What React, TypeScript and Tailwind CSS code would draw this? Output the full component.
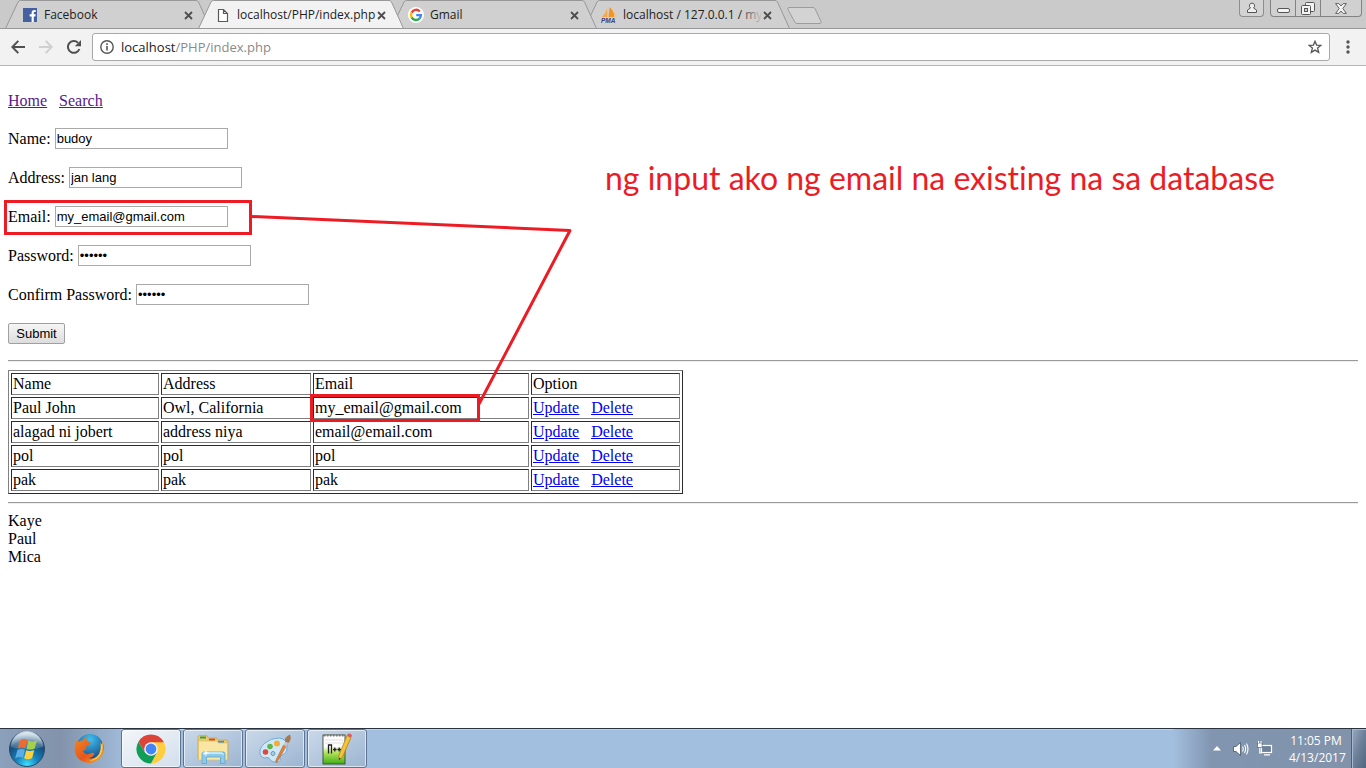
import type { ReactNode } from "react";

function CloseIcon() {
  return (
    <svg viewBox="0 0 9 9" className="h-[9px] w-[9px]" aria-hidden="true">
      <path d="M1 1 L8 8 M8 1 L1 8" stroke="#4d4d4d" strokeWidth="1.8" fill="none" />
    </svg>
  );
}

function FacebookIcon() {
  return (
    <svg viewBox="0 0 14 14" className="h-[14px] w-[14px]" aria-hidden="true">
      <rect width="14" height="14" fill="#4460a0" />
      <path d="M9.2 14 V8.4 H7.2 V6.2 H9.2 V4.7 C9.2 2.9 10.2 1.9 12 1.9 H13.3 V4 H12.3 C11.6 4 11.4 4.4 11.4 5 V6.2 H13.3 L13 8.4 H11.4 V14 Z" transform="translate(-0.6 0)" fill="#fff" />
    </svg>
  );
}

function PageIcon() {
  return (
    <svg viewBox="0 0 12 15" className="h-[15px] w-3" aria-hidden="true">
      <path d="M1.5 1.5 H6.5 L10.5 5.5 V13.5 H1.5 Z M6.5 1.5 V5.5 H10.5" fill="#fff" stroke="#5a5a5a" strokeWidth="1.2" />
    </svg>
  );
}

function GoogleIcon() {
  return (
    <svg viewBox="0 0 16 16" className="h-4 w-4" aria-hidden="true">
      <circle cx="8" cy="8" r="8" fill="#fff" />
      <g fill="none" strokeWidth="2.4">
        <path d="M11.8 4.5 A5 5 0 0 0 3.6 5.6" stroke="#ea4335" />
        <path d="M3.6 5.6 A5 5 0 0 0 3.6 10.4" stroke="#fbbc05" />
        <path d="M3.6 10.4 A5 5 0 0 0 11.4 11.7" stroke="#34a853" />
        <path d="M11.4 11.7 A5 5 0 0 0 12.9 8.1 H8.2" stroke="#4285f4" />
      </g>
    </svg>
  );
}

function PmaIcon() {
  return (
    <svg viewBox="0 0 16 16" className="h-4 w-4" aria-hidden="true">
      <path d="M6 1 L6.5 10 L1 10 Q5 6 6 1 Z" fill="#f4a84a" />
      <path d="M8.5 0 Q14 5 13 10 L7.5 10 Z" fill="#f7941d" />
      <path d="M13 4 Q15.5 7 15.5 10 L13.6 10 Z" fill="#f9c27c" />
      <text x="0" y="15.6" fontFamily="Liberation Sans, sans-serif" fontSize="6.500" fontWeight="bold" fontStyle="italic" fill="#3f3f7c">
        PMA
      </text>
    </svg>
  );
}

type TabProps = { title: string; icon: ReactNode; active?: boolean; faded?: boolean; layer: string };

function Tab({ title, icon, active, faded, layer }: TabProps) {
  return (
    <li className={`relative -mr-[13px] flex h-[29px] w-[206px] shrink-0 items-center pt-px pr-[18px] pl-4 ${layer}`}>
      <svg viewBox="0 0 206 29" preserveAspectRatio="none" className="absolute inset-0 h-full w-full" aria-hidden="true">
        <path d="M0.5 29 L13 2 Q14 0.5 15.500 0.5 H191 Q192.500 0.5 193.500 2 L205.500 29 Z" fill={active ? "#f2f2f2" : "#d0d0d0"} />
        <path
          d={
            active
              ? "M0.5 28.500 L13 2 Q14 0.5 15.500 0.5 H191 Q192.500 0.5 193.500 2 L205.500 28.500"
              : "M0.5 28.500 L13 2 Q14 0.5 15.500 0.5 H191 Q192.500 0.5 193.500 2 L205.500 28.500 Z"
          }
          fill="none"
          stroke="#989898"
        />
      </svg>
      <span className="relative mr-[5px] flex w-[18px] shrink-0 items-center justify-center">{icon}</span>
      <span className="relative min-w-0 flex-1 text-xs whitespace-nowrap text-[#222]">
        {title}
        {faded && <span className="absolute inset-y-0 right-0 w-6 bg-gradient-to-r from-transparent to-[#d0d0d0]" />}
      </span>
      <button type="button" aria-label={`Close ${title}`} className="relative">
        <CloseIcon />
      </button>
    </li>
  );
}

function WindowControls() {
  return (
    <div className="ml-auto flex h-[17px] shrink-0 items-stretch pr-1">
      <button type="button" aria-label="Profile" className="mr-1.5 flex w-[25px] items-center justify-center rounded-b border border-t-0 border-[#8e8e8e] bg-[#d3d3d3]">
        <svg viewBox="0 0 12 12" className="h-3 w-3" aria-hidden="true">
          <path d="M6 1.200 A2.300 2.600 0 0 1 7.500 6 L10.500 8 V10.500 H1.500 V8 L4.500 6 A2.300 2.600 0 0 1 6 1.200 Z" fill="#f0f0f0" stroke="#555" />
        </svg>
      </button>
      <div className="flex overflow-hidden rounded-b border border-t-0 border-[#828282] bg-[#d0d0d0]">
        <button type="button" aria-label="Minimize" className="flex w-[25px] items-center justify-center border-r border-[#828282]">
          <svg viewBox="0 0 13 5" className="mt-1 h-[5px] w-[13px]" aria-hidden="true">
            <rect x="0.500" y="0.500" width="12" height="4" rx="1.500" fill="#f4f4f4" stroke="#555" />
          </svg>
        </button>
        <button type="button" aria-label="Restore" className="flex w-[25px] items-center justify-center border-r border-[#828282]">
          <svg viewBox="0 0 14 13" className="h-[13px] w-3.5" aria-hidden="true">
            <rect x="4.500" y="0.500" width="9" height="9" rx="1" fill="#f4f4f4" stroke="#555" />
            <rect x="0.500" y="3.500" width="9" height="9" rx="1" fill="#f4f4f4" stroke="#555" />
            <rect x="3.500" y="6.500" width="3" height="3" fill="#d0d0d0" stroke="#555" />
          </svg>
        </button>
        <button type="button" aria-label="Close window" className="flex w-10 items-center justify-center">
          <svg viewBox="0 0 12 11" className="h-[11px] w-3" aria-hidden="true">
            <path d="M0.600 0.600 H3.800 L6 3 L8.200 0.600 H11.400 L7.800 5.500 L11.400 10.400 H8.200 L6 8 L3.800 10.400 H0.600 L4.200 5.500 Z" fill="#f4f4f4" stroke="#555" strokeWidth="0.900" />
          </svg>
        </button>
      </div>
    </div>
  );
}

function TabStrip() {
  return (
    <div className="flex h-[29px] items-start overflow-hidden border-b border-[#989898] bg-[#cacaca]">
      <ul className="-mb-px flex pl-[5px]">
        <Tab title="Facebook" icon={<FacebookIcon />} layer="z-[3]" />
        <Tab title="localhost/PHP/index.php" icon={<PageIcon />} active layer="z-[4]" />
        <Tab title="Gmail" icon={<GoogleIcon />} layer="z-[2]" />
        <Tab title="localhost / 127.0.0.1 / my" icon={<PmaIcon />} faded layer="z-[1]" />
      </ul>
      <button type="button" aria-label="New tab" className="mt-[7px] ml-2.5">
        <svg viewBox="0 0 35 17" className="h-[17px] w-[35px]" aria-hidden="true">
          <path d="M2 0.500 H26 Q27.500 0.500 28.200 2 L34 14.500 Q34.500 16.500 33 16.500 H10 Q8.500 16.500 7.700 15 L1 2.500 Q0.400 0.500 2 0.500 Z" fill="#d3d3d3" stroke="#9c9c9c" />
        </svg>
      </button>
      <WindowControls />
    </div>
  );
}

function Toolbar() {
  return (
    <div className="flex h-[37px] items-center border-b border-[#b6b6b6] bg-[#f2f2f2] pl-[11px]">
      <button type="button" aria-label="Back">
        <svg viewBox="0 0 14 14" className="h-3.5 w-3.5" aria-hidden="true">
          <path d="M14 7 H1.500 M7.300 0.900 L1.300 7 L7.300 13.100" fill="none" stroke="#505050" strokeWidth="2" />
        </svg>
      </button>
      <button type="button" aria-label="Forward" className="ml-3.5">
        <svg viewBox="0 0 14 14" className="h-3.5 w-3.5" aria-hidden="true">
          <path d="M0 7 H12.500 M6.700 0.900 L12.700 7 L6.700 13.100" fill="none" stroke="#cfcfcf" strokeWidth="2" />
        </svg>
      </button>
      <button type="button" aria-label="Reload" className="ml-3.5">
        <svg viewBox="0 0 14 14" className="h-3.5 w-3.5" aria-hidden="true">
          <path d="M12.400 9 A5.900 5.900 0 1 1 11 2.700" fill="none" stroke="#505050" strokeWidth="2" />
          <path d="M14 0 V6.200 H7.800 Z" fill="#505050" />
        </svg>
      </button>
      <div className="ml-[11px] flex h-7 min-w-0 flex-1 items-center rounded-[3px] border border-[#a9a9a9] bg-white pr-[7px] pl-[7px]">
        <svg viewBox="0 0 14 14" className="h-3.5 w-3.5 shrink-0" aria-hidden="true">
          <circle cx="7" cy="7" r="6.200" fill="none" stroke="#555" strokeWidth="1.400" />
          <path d="M7 6 V10.500 M7 3.300 V5" stroke="#555" strokeWidth="1.600" />
        </svg>
        <p className="ml-[7px] min-w-0 flex-1 text-[13px] leading-5 text-[#8a8a8a]">
          <span className="text-[#222]">localhost</span>/PHP/index.php
        </p>
        <button type="button" aria-label="Bookmark this page">
          <svg viewBox="0 0 14 14" className="h-3.5 w-3.5" aria-hidden="true">
            <path d="M7 1.300 L8.600 5.100 L12.900 5.400 L9.600 8.100 L10.700 12.400 L7 10.100 L3.300 12.400 L4.400 8.100 L1.100 5.400 L5.400 5.100 Z" fill="none" stroke="#555" strokeWidth="1.300" />
          </svg>
        </button>
      </div>
      <button type="button" aria-label="Menu" className="mr-4 ml-4">
        <svg viewBox="0 0 4 14" className="h-3.5 w-1" aria-hidden="true">
          <g fill="#555">
            <circle cx="2" cy="2" r="1.700" />
            <circle cx="2" cy="7" r="1.700" />
            <circle cx="2" cy="12" r="1.700" />
          </g>
        </svg>
      </button>
    </div>
  );
}

const fields = [
  { id: "name", label: "Name:", type: "text", value: "budoy" },
  { id: "address", label: "Address:", type: "text", value: "jan lang" },
  { id: "email", label: "Email:", type: "text", value: "my_email@gmail.com" },
  { id: "password", label: "Password:", type: "password", value: "123456" },
  { id: "confirm", label: "Confirm Password:", type: "password", value: "123456" },
];

const people = [
  ["Paul John", "Owl, California", "my_email@gmail.com"],
  ["alagad ni jobert", "address niya", "email@email.com"],
  ["pol", "pol", "pol"],
  ["pak", "pak", "pak"],
];

const cell = "border border-t-[#2c2c2c] border-r-[#808080] border-b-[#808080] border-l-[#2c2c2c] p-px text-left font-normal";

function Rule() {
  return <hr className="h-0.5 border-t border-b border-t-[#9a9a9a] border-b-[#eeeeee]" />;
}

function Page() {
  return (
    <main className="relative flex-1 bg-white px-2 pt-[26px] pb-2 font-['Liberation_Serif',serif] text-base leading-[18px] text-black">
      <nav className="flex gap-3 text-[#551a8b] underline">
        <a href="#home">Home</a>
        <a href="#search">Search</a>
      </nav>

      <form className="mt-[18px] flex flex-col items-start gap-[18px]" onSubmit={(e) => e.preventDefault()}>
        {fields.map((f) => (
          <div key={f.id} className="flex h-[21px] items-center gap-1">
            <label htmlFor={f.id}>{f.label}</label>
            <input
              id={f.id}
              type={f.type}
              defaultValue={f.value}
              className="h-[21px] w-[173px] border border-[#a9a9a9] bg-white px-px font-['Liberation_Sans',sans-serif] text-[13px]"
            />
          </div>
        ))}
        <button
          type="submit"
          className="h-[21px] w-[57px] rounded-[2px] border border-[#a0a0a0] bg-gradient-to-b from-[#f6f6f6] to-[#dddddd] font-['Liberation_Sans',sans-serif] text-[13px] leading-4"
        >
          Submit
        </button>
      </form>

      <div className="mt-4 flex flex-col gap-2">
        <Rule />
        <table className="w-[675px] table-fixed border-separate border-spacing-0.5 border border-t-[#808080] border-r-[#2c2c2c] border-b-[#2c2c2c] border-l-[#808080]">
          <colgroup>
            <col className="w-[148px]" />
            <col className="w-[150px]" />
            <col className="w-[216px]" />
            <col />
          </colgroup>
          <thead>
            <tr>
              {["Name", "Address", "Email", "Option"].map((h) => (
                <th key={h} scope="col" className={cell}>
                  {h}
                </th>
              ))}
            </tr>
          </thead>
          <tbody>
            {people.map((row) => (
              <tr key={row[0]}>
                {row.map((value, i) => (
                  <td key={i} className={cell}>
                    {value}
                  </td>
                ))}
                <td className={cell}>
                  <span className="flex gap-3 text-[#0000ee] underline">
                    <a href="#update">Update</a>
                    <a href="#delete">Delete</a>
                  </span>
                </td>
              </tr>
            ))}
          </tbody>
        </table>
        <Rule />
        <div>
          <p>Kaye</p>
          <p>Paul</p>
          <p>Mica</p>
        </div>
      </div>

      <svg viewBox="0 0 600 400" className="pointer-events-none absolute top-0 left-0 h-[400px] w-[600px]" aria-hidden="true">
        <g fill="none" stroke="#ed1c24" strokeWidth="3">
          <rect x="5.500" y="135.500" width="245" height="32" />
          <rect x="311.500" y="329.500" width="167" height="25" />
          <path d="M252 150.500 L570 164.500 L479 338" strokeLinejoin="round" />
        </g>
      </svg>
      <p className="absolute top-[92px] left-[605px] font-['Lato',sans-serif] text-[32px] leading-10 whitespace-nowrap text-[#ed1c24] [font-variant-ligatures:none]">
        ng input ako ng email na existing na sa database
      </p>
    </main>
  );
}

function StartOrb() {
  return (
    <svg viewBox="0 0 38 38" className="h-[38px] w-[38px]" aria-hidden="true">
      <defs>
        <radialGradient id="orb" cx="0.5" cy="0.950" r="0.900">
          <stop offset="0" stopColor="#3fe0ff" />
          <stop offset="0.350" stopColor="#1583bd" />
          <stop offset="0.750" stopColor="#174a78" />
          <stop offset="1" stopColor="#8fb3cc" />
        </radialGradient>
        <linearGradient id="orbShine" x1="0" y1="0" x2="0" y2="1">
          <stop offset="0" stopColor="#fff" stopOpacity="0.750" />
          <stop offset="1" stopColor="#fff" stopOpacity="0.100" />
        </linearGradient>
      </defs>
      <circle cx="19" cy="19" r="17.500" fill="url(#orb)" stroke="#294a68" />
      <path d="M3 17 A16 16 0 0 1 35 17 Q19 22 3 17 Z" fill="url(#orbShine)" />
      <path d="M12 10.500 Q15.500 8 19.400 10 L17.400 18.200 Q13.500 16.500 9.700 18.600 Z" fill="#ee6a31" />
      <path d="M20.500 10.600 Q24.500 12.600 29 10.300 L26.700 18.400 Q22.500 20.600 18.500 18.700 Z" fill="#a3d14c" />
      <path d="M9.400 20 Q13 18 17 19.700 L15 27.800 Q11.300 26.200 7.200 28.200 Z" fill="#5aaee6" />
      <path d="M18.200 20.200 Q22 22 26.300 19.900 L24.200 27.900 Q20.300 30.300 16.100 28.300 Z" fill="#fccf3c" />
    </svg>
  );
}

function FirefoxIcon() {
  return (
    <svg viewBox="0 0 32 32" className="h-8 w-8" aria-hidden="true">
      <defs>
        <linearGradient id="fox" x1="0" y1="0" x2="1" y2="1">
          <stop offset="0" stopColor="#f08a20" />
          <stop offset="0.550" stopColor="#e8561c" />
          <stop offset="1" stopColor="#f9b229" />
        </linearGradient>
        <radialGradient id="globe" cx="0.500" cy="0.200" r="0.800">
          <stop offset="0" stopColor="#3ec1f0" />
          <stop offset="1" stopColor="#17407f" />
        </radialGradient>
      </defs>
      <circle cx="17" cy="14.500" r="13.500" fill="url(#globe)" />
      <path d="M29 8 Q33 18 27 25 Q20 32 11 29 Q2 26 1.500 16 Q1.500 10 4 6 L5 9 Q7 7 10 7.500 Q11 4.500 14 3.500 Q12.500 6 14 8 L17.500 9.500 Q17.500 11.500 13.500 13 Q12.500 15 14 17 Q10 16 10.500 19 Q13 22.500 17 20.500 Q20 19 21.500 20.500 Q20 24.500 15 25 Q23 27 27 20 Q29.500 15 27.500 10 L29 12 Z" fill="url(#fox)" />
      <path d="M29 8 Q31 15 28 21 Q24 28 16 28 Q26 25 27.500 17 Q28.200 13 27.500 10 L29 12 Z" fill="#fbd04a" />
    </svg>
  );
}

function ChromeIcon() {
  return (
    <svg viewBox="0 0 30 30" className="h-[30px] w-[30px]" aria-hidden="true">
      <path d="M27.560 7.750 A14.500 14.500 0 0 1 15 29.500 L20.900 18.400 L15 8.200 Z" fill="#ffcd40" />
      <path d="M2.440 7.750 A14.500 14.500 0 0 0 15 29.500 L20.900 18.400 H9.100 Z" fill="#0f9d58" />
      <path d="M15 8.200 H27.800 L27.560 7.750 A14.500 14.500 0 0 0 2.440 7.750 L9.100 18.400 Z" fill="#db4437" />
      <circle cx="15" cy="15" r="6.800" fill="#f4f4f4" />
      <circle cx="15" cy="15" r="5.400" fill="#4285f4" />
    </svg>
  );
}

function ExplorerIcon() {
  return (
    <svg viewBox="0 0 32 30" className="h-[30px] w-8" aria-hidden="true">
      <path d="M1 25 V3 Q1 1.500 2.500 1.500 H10 L11.500 4 H20 L21 6 H29 Q31 6 31 8 V25 Z" fill="#eccb6c" stroke="#cda64a" strokeWidth="0.800" />
      <rect x="3" y="2.500" width="6" height="2" fill="#31a24c" />
      <rect x="12" y="4.600" width="6" height="2" fill="#cd4b37" />
      <rect x="21" y="6.800" width="6" height="2" fill="#3a94d8" />
      <path d="M1.500 26 V7 H20 L21.500 9 H30.500 V26 Z" fill="#f9e6a2" stroke="#dcbb62" strokeWidth="0.600" />
      <path d="M5 29.500 V20 Q5 18 7 18 H26 Q28 18 28 20 V29.500 H23.500 V23 H9.500 V29.500 Z" fill="#8ccbea" stroke="#5fa4cb" strokeWidth="0.800" />
      <path d="M6.500 20.500 L8.500 19 H24.500 L26.500 20.500" fill="none" stroke="#d9f2fd" strokeWidth="1.500" />
      <path d="M9 15 L9.700 18.300 L13 19 L9.700 19.700 L9 23 L8.300 19.700 L5 19 L8.300 18.300 Z" fill="#fff" />
    </svg>
  );
}

function PaintIcon() {
  return (
    <svg viewBox="0 0 33 30" className="h-[30px] w-[33px]" aria-hidden="true">
      <path d="M1 20 Q0 14 6 9 Q12 4 20 4 Q29 5 28 14 Q28 19 23 21 Q20 22 21 25 Q22 29 15 28 Q11 27 10 24 Q8 23 6 24 Q2 24 1 20 Z" fill="#cfe8f7" stroke="#6caed6" />
      <circle cx="6.500" cy="18" r="2.800" fill="#dc4a3d" />
      <circle cx="11" cy="12.500" r="2.800" fill="#62b34b" />
      <circle cx="18" cy="9.500" r="3" fill="#f5ae32" />
      <circle cx="14" cy="19.500" r="2" fill="#b1cfdf" stroke="#5f9bbf" />
      <path d="M18 28 Q16 29.500 17 26 L24.500 11 L27 12.500 Z" fill="#de823e" stroke="#b9662e" strokeWidth="0.600" />
      <path d="M24.500 11 L26.500 7 L29 8.500 L27 12.500 Z" fill="#c5c5c5" />
      <path d="M26 7.500 Q25 3 31 0.500 Q33 5 29.500 9 Z" fill="#a87950" />
    </svg>
  );
}

function NotepadIcon() {
  return (
    <svg viewBox="0 0 30 32" className="h-8 w-[30px]" aria-hidden="true">
      <defs>
        <linearGradient id="npp" x1="0" y1="0" x2="0" y2="1">
          <stop offset="0.400" stopColor="#fff" />
          <stop offset="0.600" stopColor="#b6e45a" />
          <stop offset="1" stopColor="#3fae18" />
        </linearGradient>
      </defs>
      <rect x="1" y="2" width="22" height="29" fill="url(#npp)" stroke="#3b4a30" strokeWidth="0.900" />
      <path d="M2 2.500 H22" stroke="#777" strokeWidth="2" strokeDasharray="1.500 1.500" />
      <path d="M3 7 H21 M3 10 H21" stroke="#ddd" />
      <path d="M6.500 20.500 V12 H9.500 V20.500 M11 16.500 H14.600 M12.800 14.500 V18.500 M15.400 16.500 H19 M17.200 14.500 V18.500" fill="none" stroke="#202020" strokeWidth="1.300" />
      <path d="M25 2.500 L29 4.500 L20.500 24 L17 27 L16.800 22.500 Z" fill="#f3c33a" stroke="#a87520" strokeWidth="0.700" />
      <path d="M25 2.500 L26 0.800 Q29 0 30 2.500 L29 4.500 Z" fill="#d95d55" />
      <path d="M17 27 L17 24.700 L18.700 25.400 Z" fill="#333" />
    </svg>
  );
}

function TaskButton({ label, active, children }: { label: string; active?: boolean; children: ReactNode }) {
  return (
    <button
      type="button"
      aria-label={label}
      className={`flex w-[60px] items-center justify-center rounded-[3px] border border-[#5f7390] shadow-[inset_0_0_0_1px_rgba(255,255,255,0.6)] ${
        active ? "bg-gradient-to-br from-[#f3f6fa] to-[#d3dfec]" : "bg-gradient-to-br from-[#cad9ea] to-[#9db5d1]"
      }`}
    >
      {children}
    </button>
  );
}

function Taskbar() {
  return (
    <footer className="flex h-10 items-stretch border-t border-[#29323f] bg-[#a3bfdf] shadow-[inset_0_1px_0_#c3d3e6]">
      <div className="flex w-[121px] items-center bg-gradient-to-r from-[#8ba0bb] via-[#8293ab] to-[#a0b9d7] pl-2">
        <button type="button" aria-label="Start">
          <StartOrb />
        </button>
        <button type="button" aria-label="Firefox" className="ml-[27px]">
          <FirefoxIcon />
        </button>
      </div>
      <div className="flex gap-0.5">
        <TaskButton label="Chrome" active>
          <ChromeIcon />
        </TaskButton>
        <TaskButton label="Explorer">
          <ExplorerIcon />
        </TaskButton>
        <TaskButton label="Paint">
          <PaintIcon />
        </TaskButton>
        <TaskButton label="Notepad++">
          <NotepadIcon />
        </TaskButton>
      </div>
      <div className="ml-auto flex items-stretch bg-gradient-to-r from-[#a3bfdf] via-[#8195b0] via-20% to-[#8193aa] pl-10">
        <button type="button" aria-label="Show hidden icons" className="flex items-center">
          <svg viewBox="0 0 8 5" className="h-[5px] w-2" aria-hidden="true">
            <path d="M4 0 L8 4.500 H0 Z" fill="#fff" />
          </svg>
        </button>
        <button type="button" aria-label="Volume" className="ml-3 flex items-center">
          <svg viewBox="0 0 16 14" className="h-3.5 w-4" aria-hidden="true">
            <path d="M0.500 4.500 H3 L7.500 0.500 V13.500 L3 9.500 H0.500 Z" fill="#fff" stroke="#47566a" strokeWidth="0.800" />
            <path d="M9.500 4.500 Q11 7 9.500 9.500 M11.500 3 Q13.800 7 11.500 11 M13.500 1.500 Q16.500 7 13.500 12.500" fill="none" stroke="#fff" strokeWidth="1.100" />
          </svg>
        </button>
        <button type="button" aria-label="Network" className="ml-2 flex items-center">
          <svg viewBox="0 0 16 15" className="h-[15px] w-4" aria-hidden="true">
            <rect x="4.500" y="4.500" width="10" height="7" fill="#6d819b" stroke="#fff" strokeWidth="1.200" />
            <path d="M7 13.800 H13 M2.800 6 V12 H4.500" fill="none" stroke="#fff" strokeWidth="1.200" />
            <rect x="0.500" y="2" width="4.600" height="4.500" fill="#fff" stroke="#47566a" strokeWidth="0.600" />
            <path d="M1.500 0 V2 M4 0 V2" stroke="#fff" strokeWidth="1.100" />
          </svg>
        </button>
        <div className="ml-4 flex w-[54px] flex-col justify-center text-center text-xs leading-[17px] whitespace-nowrap text-white">
          <span>11:05 PM</span>
          <span>4/13/2017</span>
        </div>
        <button
          type="button"
          aria-label="Show desktop"
          className="ml-2 w-[15px] border-l border-[#4d5f77] bg-gradient-to-br from-[#9aabc0] via-[#6d809a] to-[#52667f] shadow-[inset_1px_1px_0_#a9b9cd]"
        />
      </div>
    </footer>
  );
}

export default function App() {
  return (
    <div className="flex min-h-screen flex-col overflow-hidden bg-white font-['Open_Sans','Noto_Sans',sans-serif]">
      <header>
        <TabStrip />
        <Toolbar />
      </header>
      <Page />
      <Taskbar />
    </div>
  );
}
